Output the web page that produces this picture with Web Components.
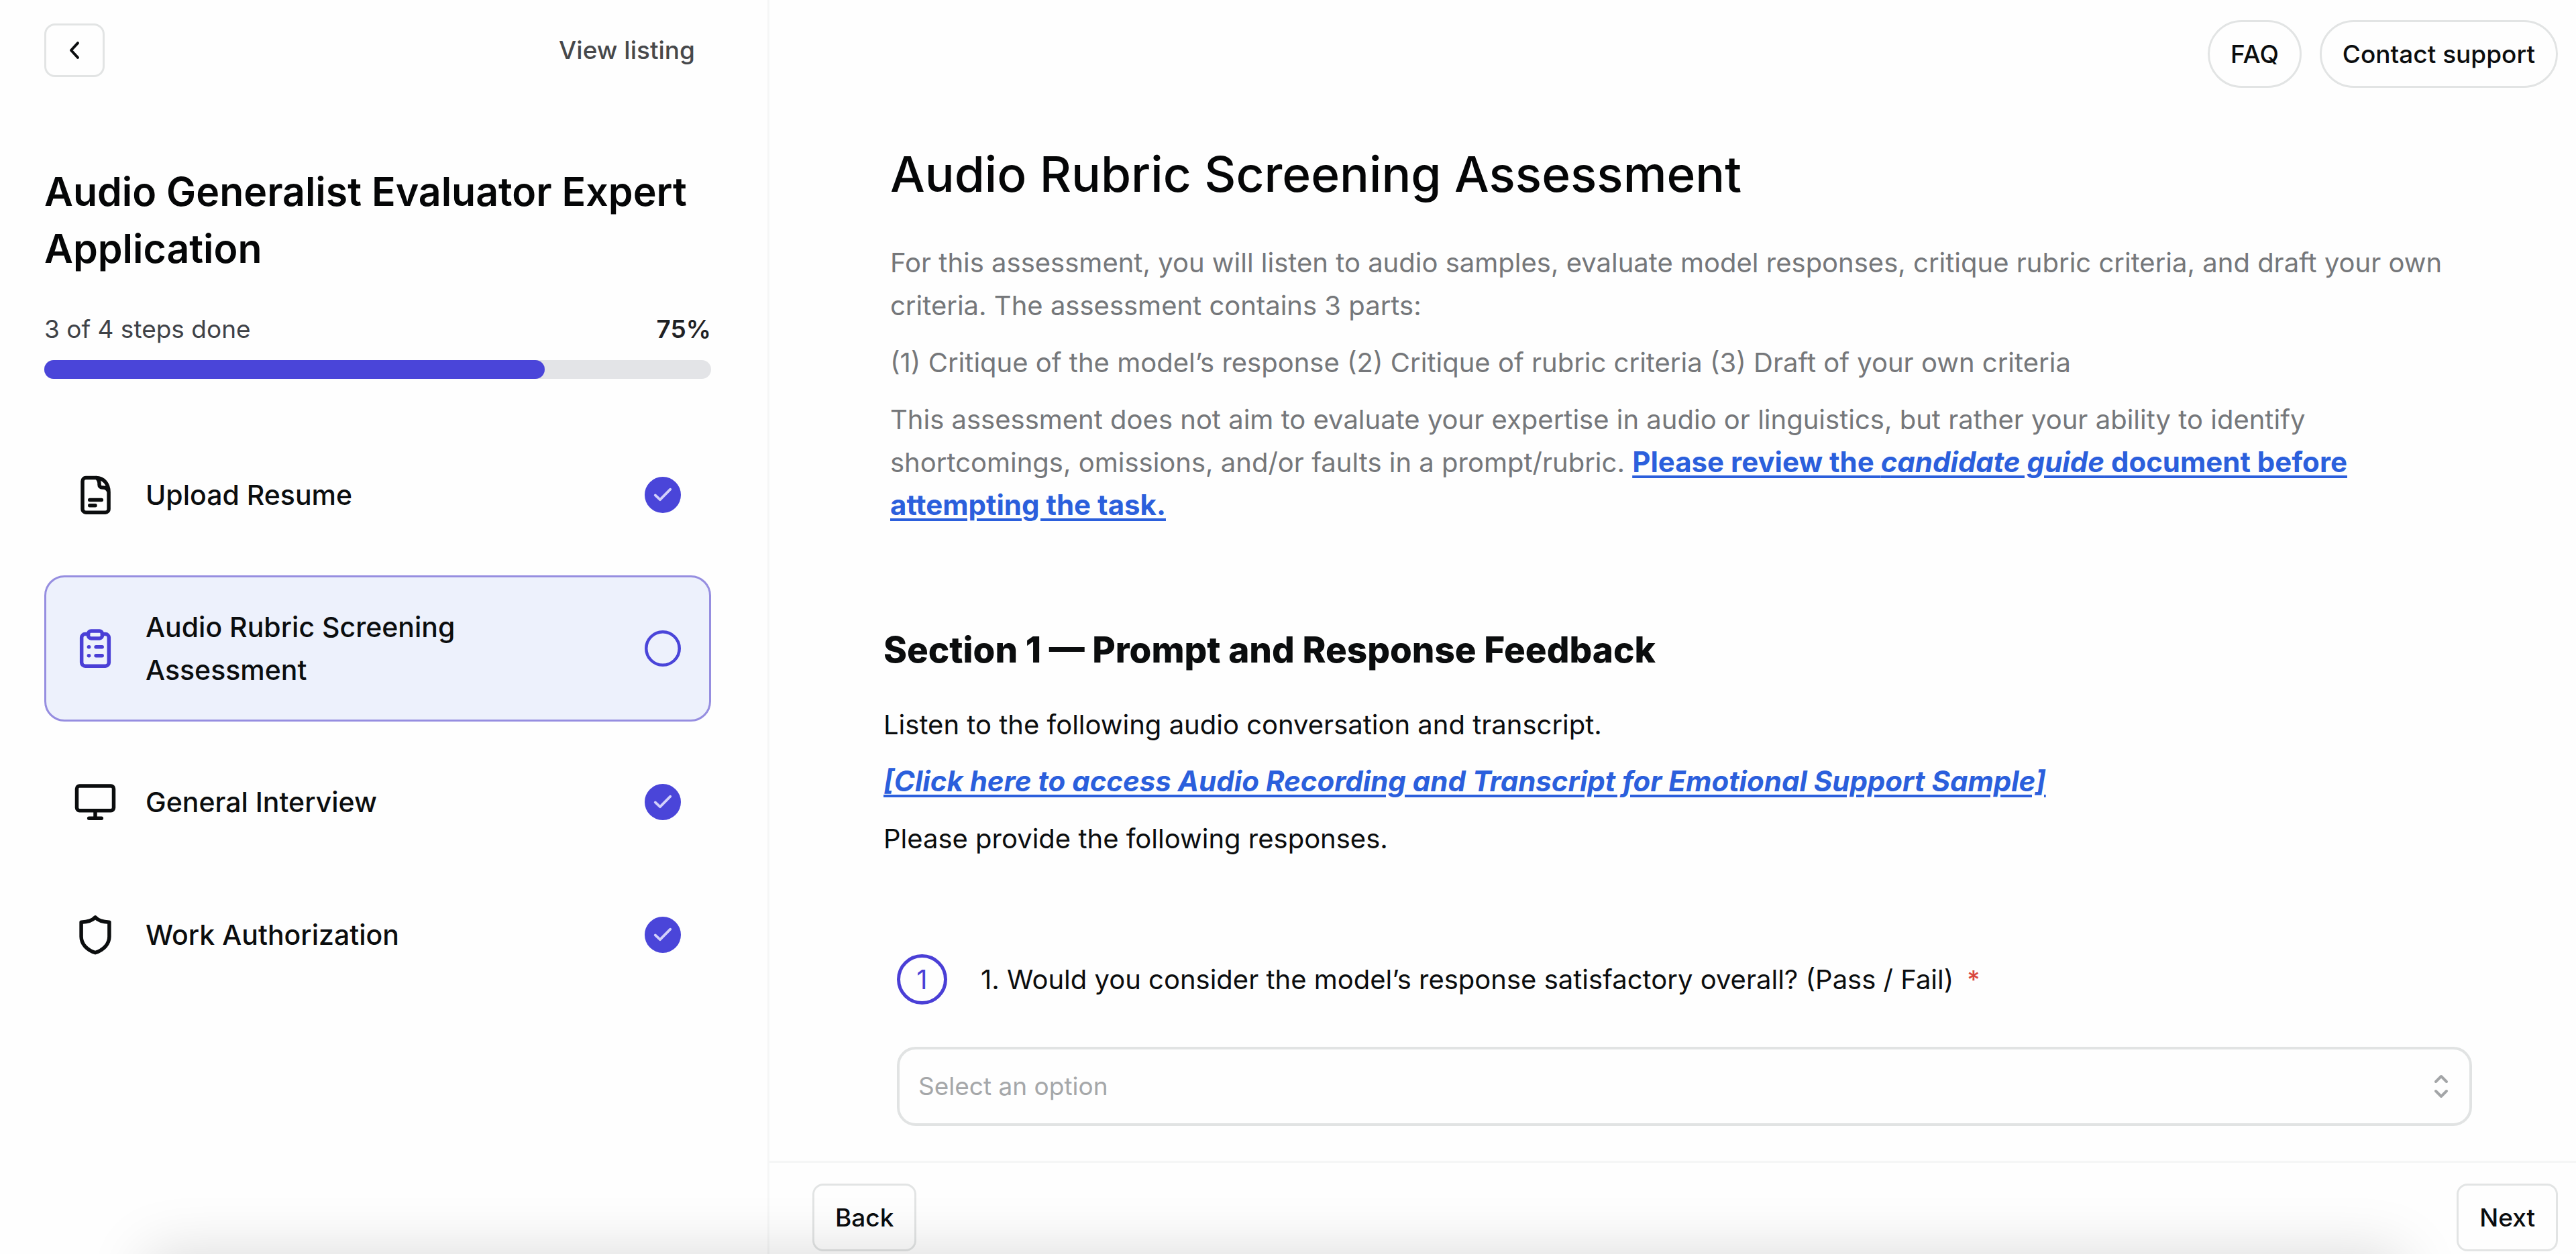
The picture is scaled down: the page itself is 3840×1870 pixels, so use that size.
<!DOCTYPE html>
<html lang="en">
<head>
<meta charset="utf-8">
<title>Audio Rubric Screening Assessment</title>
<style>
    body {
        margin: 0;
        background: #fefefe;
        color: #0b0d0e;
        font-family: Inter, "Liberation Sans", sans-serif;
        font-size: 40px;
        line-height: 64px;
    }
</style>
</head>
<body>
<application-page></application-page>

<script>
const ICONS = {
    document: `<path d="M12.5 2.7H6.9A1.8 1.8 0 0 0 5.1 4.500V19.700A1.8 1.8 0 0 0 6.900 21.500H17.500A1.8 1.8 0 0 0 19.300 19.700V10.500C19.300 6 16.500 2.700 12.500 2.700ZM12.500 2.700C13.900 3.500 14.200 4.800 14.200 6.200V6.500A1.500 1.500 0 0 0 15.700 8H16C17.700 8 18.900 8.800 19.300 10.500M9 14.700H15.400M9 17.700H12"/>`,
    clipboard: `<path d="M8.2 4.200H6.500A1.900 1.900 0 0 0 4.600 6.100V19.600A1.900 1.900 0 0 0 6.500 21.500H17.500A1.900 1.900 0 0 0 19.400 19.600V6.100A1.900 1.900 0 0 0 17.500 4.200H15.800M12.400 11.200H15.700M12.400 15.900H15.700M8.500 11.200H8.600M8.500 15.900H8.600"/><rect x="8.200" y="2.500" width="7.600" height="4" rx="1.500"/>`,
    monitor: `<rect x="2" y="3.300" width="20" height="13.300" rx="1.500"/><path d="M12 16.600V20.800M8.600 20.800H15.400"/>`,
    shield: `<path d="M12 2.500C10.700 4 8 5 4.400 5.200V13C4.400 17 7.500 20.300 12 21.700C16.500 20.300 19.600 17 19.600 13V5.200C16 5 13.300 4 12 2.500Z"/>`
};

class ApplicationPage extends HTMLElement {

    constructor() {
        super();
        this.shadowDOM = this.attachShadow({mode: "open"});
    }

    connectedCallback() {
        this.shadowDOM.innerHTML = `
        <style>
        :host {
            display: grid;
            grid-template-columns: minmax(0, 1147fr) minmax(0, 2693fr);
            min-height: 100vh;
        }
        /* soft shade along the bottom edge of the window */
        .window-shadow {
            position: fixed;
            left: 220px;
            right: 260px;
            bottom: -210px;
            height: 210px;
            box-shadow: 0 0 90px rgba(0, 0, 0, 0.15);
            pointer-events: none;
        }
        </style>
        <application-sidebar></application-sidebar>
        <assessment-panel></assessment-panel>
        <div class="window-shadow"></div>`;
    }
}

class ApplicationSidebar extends HTMLElement {

    constructor() {
        super();
        this.shadowDOM = this.attachShadow({mode: "open"});
    }

    connectedCallback() {
        this.shadowDOM.innerHTML = `
        <style>
        :host {
            display: block;
            box-sizing: border-box;
            border-right: 3px solid #f5f6f6;
            padding: 35px 84px 35px 66px;
        }
        header {
            display: flex;
            justify-content: space-between;
            align-items: center;
            padding-right: 24px;
        }
        header a {
            color: #46484b;
            font-size: 37px;
            font-weight: 500;
            text-decoration: none;
        }
        h2 {
            margin: 128px 0 0;
            font-size: 59px;
            font-weight: 600;
            line-height: 85px;
            color: #050607;
        }
        nav {
            display: grid;
            gap: 42px;
            margin-top: 95px;
        }
        </style>
        <header>
            <outline-button shape="icon" label="Go back">
                <svg width="40" height="40" viewBox="0 0 24 24" fill="none" stroke="currentColor" stroke-width="2.400" stroke-linecap="round" stroke-linejoin="round"><path d="M15 5.500L9 12L15 18.500"/></svg>
            </outline-button>
            <a href="#listing">View listing</a>
        </header>
        <h2>Audio Generalist Evaluator Expert Application</h2>
        <step-progress done="3" total="4"></step-progress>
        <nav>
            <step-item icon="document" done>Upload Resume</step-item>
            <step-item icon="clipboard" active>Audio Rubric Screening Assessment</step-item>
            <step-item icon="monitor" done>General Interview</step-item>
            <step-item icon="shield" done>Work Authorization</step-item>
        </nav>`;
    }
}

class StepProgress extends HTMLElement {

    constructor() {
        super();
        this.shadowDOM = this.attachShadow({mode: "open"});
    }

    connectedCallback() {
        const done = this.getAttribute("done");
        const total = this.getAttribute("total");
        const percent = Math.round(done / total * 100);
        this.shadowDOM.innerHTML = `
        <style>
        :host {
            display: block;
            margin-top: 46px;
            font-size: 37px;
        }
        .label {
            display: flex;
            justify-content: space-between;
            color: #3f4247;
        }
        strong {
            font-weight: 600;
            color: #1f2124;
        }
        .track {
            height: 28px;
            margin-top: 14px;
            border-radius: 14px;
            background: #e3e4e7;
        }
        .fill {
            width: ${percent}%;
            height: 100%;
            border-radius: inherit;
            background: #4a45d9;
        }
        </style>
        <div class="label"><span>${done} of ${total} steps done</span><strong>${percent}%</strong></div>
        <div class="track"><div class="fill"></div></div>`;
    }
}

class StepItem extends HTMLElement {

    constructor() {
        super();
        this.shadowDOM = this.attachShadow({mode: "open"});
    }

    connectedCallback() {
        const check = this.hasAttribute("done") ? `<path d="M7 12.200L10.200 15.200L17 8.300" stroke="#d3d1fa" stroke-width="1.700"/>` : "";
        this.shadowDOM.innerHTML = `
        <style>
        :host {
            display: block;
        }
        a {
            display: flex;
            align-items: center;
            gap: 42px;
            padding: 42px 42px 42px 40px;
            border: 3px solid transparent;
            border-radius: 30px;
            color: #0b0d0e;
            font-size: 41px;
            font-weight: 500;
            text-decoration: none;
        }
        :host([active]) a {
            background: #edf1fc;
            border-color: #968ee0;
        }
        svg {
            flex: none;
            fill: none;
            stroke: currentColor;
            stroke-width: 2;
            stroke-linecap: round;
            stroke-linejoin: round;
        }
        :host([active]) .icon {
            color: #4a3fd6;
        }
        .label {
            flex: 1;
            padding-right: 160px;
        }
        .status {
            fill: none;
            color: #4a45d9;
        }
        :host([done]) .status circle {
            fill: currentColor;
        }
        </style>
        <a href="#step">
            <svg class="icon" width="66" height="66" viewBox="0 0 24 24">${ICONS[this.getAttribute("icon")]}</svg>
            <span class="label"><slot></slot></span>
            <svg class="status" width="54" height="54" viewBox="0 0 24 24"><circle cx="12" cy="12" r="11"/>${check}</svg>
        </a>`;
    }
}

class OutlineButton extends HTMLElement {

    constructor() {
        super();
        this.shadowDOM = this.attachShadow({mode: "open"});
    }

    connectedCallback() {
        const label = this.getAttribute("label");
        this.shadowDOM.innerHTML = `
        <style>
        :host {
            display: block;
        }
        button {
            display: flex;
            align-items: center;
            justify-content: center;
            box-sizing: border-box;
            height: 101px;
            padding: 0 31px;
            border: 3px solid #e2e4e4;
            border-radius: 16px;
            background: transparent;
            color: #0b0d0e;
            font: 500 37px/64px Inter, "Liberation Sans", sans-serif;
        }
        :host([shape="pill"]) button {
            border-radius: 51px;
        }
        :host([shape="icon"]) button {
            width: 90px;
            height: 80px;
            padding: 0;
        }
        </style>
        <button type="button"${label ? ` aria-label="${label}"` : ""}><slot></slot></button>`;
    }
}

class AssessmentPanel extends HTMLElement {

    constructor() {
        super();
        this.shadowDOM = this.attachShadow({mode: "open"});
    }

    connectedCallback() {
        this.shadowDOM.innerHTML = `
        <style>
        :host {
            display: flex;
            flex-direction: column;
        }
        .help {
            display: flex;
            justify-content: flex-end;
            gap: 27px;
            padding: 30px 27px 0;
        }
        main {
            flex: 1;
            padding: 76px 155px 0 170px;
        }
        h1 {
            margin: 0 0 47px;
            padding-left: 10px;
            font-size: 73px;
            font-weight: 500;
            line-height: 106px;
            color: #050607;
        }
        .intro {
            padding-left: 10px;
            color: #75777a;
        }
        p {
            margin: 0 0 21px;
        }
        a {
            color: #2b5fdc;
            font-size: 42px;
            font-weight: 700;
            line-height: 48px;
            text-decoration-thickness: 4px;
            text-underline-offset: 5px;
        }
        h3 {
            margin: 147px 0 44px;
            font-size: 53px;
            font-weight: 800;
            line-height: 72px;
        }
        question-field {
            margin: 140px 0 0 20px;
        }
        footer {
            display: flex;
            justify-content: space-between;
            border-top: 3px solid #f5f6f6;
            padding: 31px 27px 4px 64px;
        }
        </style>
        <div class="help">
            <outline-button shape="pill">FAQ</outline-button>
            <outline-button shape="pill">Contact support</outline-button>
        </div>
        <main>
            <h1>Audio Rubric Screening Assessment</h1>
            <div class="intro">
                <p>For this assessment, you will listen to audio samples, evaluate model responses, critique rubric criteria, and draft your own criteria. The assessment contains 3 parts:</p>
                <p>(1) Critique of the model’s response (2) Critique of rubric criteria (3) Draft of your own criteria</p>
                <p>This assessment does not aim to evaluate your expertise in audio or linguistics, but rather your ability to identify shortcomings, omissions, and/or faults in a prompt/rubric. <a href="#guide">Please review the <em>candidate guide</em> document before attempting the task.</a></p>
            </div>
            <h3>Section 1 — Prompt and Response Feedback</h3>
            <p>Listen to the following audio conversation and transcript.</p>
            <p><a href="#sample"><em>[Click here to access Audio Recording and Transcript for Emotional Support Sample]</em></a></p>
            <p>Please provide the following responses.</p>
            <question-field number="1">1. Would you consider the model’s response satisfactory overall? (Pass / Fail)</question-field>
        </main>
        <footer>
            <outline-button>Back</outline-button>
            <outline-button>Next</outline-button>
        </footer>`;
    }
}

class QuestionField extends HTMLElement {

    constructor() {
        super();
        this.shadowDOM = this.attachShadow({mode: "open"});
    }

    connectedCallback() {
        this.shadowDOM.innerHTML = `
        <style>
        :host {
            display: block;
        }
        .question {
            display: flex;
            align-items: center;
        }
        .number {
            flex: none;
            box-sizing: border-box;
            width: 75px;
            height: 75px;
            margin-right: 50px;
            border: 5px solid #4a3fd6;
            border-radius: 50%;
            color: #4a3fd6;
            line-height: 65px;
            text-align: center;
        }
        .required {
            margin-left: 20px;
            color: #d9473f;
            font-size: 37px;
            font-weight: 500;
        }
        .field {
            display: grid;
            align-items: center;
            margin-top: 63px;
        }
        select, svg {
            grid-area: 1 / 1;
        }
        select {
            appearance: none;
            box-sizing: border-box;
            width: 100%;
            height: 118px;
            padding: 0 28px;
            border: 4px solid #e1e3e3;
            border-radius: 28px;
            background: transparent;
            color: #a5a7a9;
            font: 400 37px/64px Inter, "Liberation Sans", sans-serif;
        }
        svg {
            justify-self: end;
            margin-right: 26px;
            pointer-events: none;
        }
        </style>
        <div class="question">
            <span class="number">${this.getAttribute("number")}</span>
            <label for="answer"><slot></slot></label>
            <span class="required">*</span>
        </div>
        <div class="field">
            <select id="answer" required>
                <option value="">Select an option</option>
                <option>Pass</option>
                <option>Fail</option>
            </select>
            <svg width="40" height="40" viewBox="0 0 40 40" fill="none" stroke="#a3a5a7" stroke-width="4" stroke-linecap="round" stroke-linejoin="round"><path d="M12 13L20 5L28 13M12 27L20 35L28 27"/></svg>
        </div>`;
    }
}

customElements.define("outline-button", OutlineButton);
customElements.define("step-progress", StepProgress);
customElements.define("step-item", StepItem);
customElements.define("question-field", QuestionField);
customElements.define("application-sidebar", ApplicationSidebar);
customElements.define("assessment-panel", AssessmentPanel);
customElements.define("application-page", ApplicationPage);
</script>
</body>
</html>
